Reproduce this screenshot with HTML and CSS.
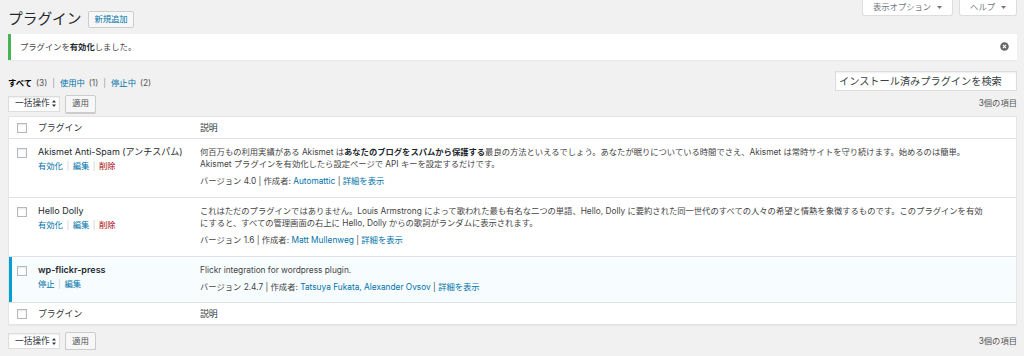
FILE: index.html
```html
<!DOCTYPE html>
<html lang="ja">
<head>
    <meta charset="UTF-8">
    <meta name="viewport" content="width=device-width, initial-scale=1.0">
    <title>プラグイン</title>
    <link rel="stylesheet" href="styles.css">
</head>
<body>
<div class="wrap">
    <div class="page-header">
        <div class="title-group">
            <h1 class="page-title">プラグイン</h1>
            <a class="title-action" href="#">新規追加</a>
        </div>
        <div class="screen-meta">
            <button class="meta-tab">表示オプション
                <svg width="5" height="3" viewBox="0 0 10 6"><path d="M0 0h10L5 6z" fill="#72777c"/></svg>
            </button>
            <button class="meta-tab">ヘルプ
                <svg width="5" height="3" viewBox="0 0 10 6"><path d="M0 0h10L5 6z" fill="#72777c"/></svg>
            </button>
        </div>
    </div>

    <div class="notice">
        <p>プラグインを<strong>有効化</strong>しました。</p>
        <button class="notice-dismiss">
            <svg width="9" height="9" viewBox="0 0 20 20"><circle cx="10" cy="10" r="9.5" fill="#666"/><path d="M6.5 6.5l7 7M13.5 6.5l-7 7" stroke="#fff" stroke-width="2.4"/></svg>
        </button>
    </div>

    <div class="filters">
        <ul class="subsubsub">
            <li><a class="current" href="#">すべて<span class="count">(3)</span></a><span class="sep">|</span></li>
            <li><a href="#">使用中<span class="count">(1)</span></a><span class="sep">|</span></li>
            <li><a href="#">停止中<span class="count">(2)</span></a></li>
        </ul>
        <input class="search-input" type="search" placeholder="インストール済みプラグインを検索">
    </div>

    <div class="tablenav">
        <div class="bulk-actions">
            <div class="select">一括操作
                <svg width="4" height="7" viewBox="0 0 8 14"><path d="M4 0l4 5H0zM4 14l4-5H0z" fill="#32373c"/></svg>
            </div>
            <button class="button">適用</button>
        </div>
        <span class="num-items">3個の項目</span>
    </div>

    <table class="plugins">
        <colgroup>
            <col class="col-check">
            <col class="col-name">
            <col>
        </colgroup>
        <thead>
            <tr>
                <th class="check"><input class="checkbox" type="checkbox"></th>
                <th>プラグイン</th>
                <th>説明</th>
            </tr>
        </thead>
        <tbody>
            <tr class="inactive">
                <th class="check"><input class="checkbox" type="checkbox"></th>
                <td class="plugin-title">
                    <strong>Akismet Anti-Spam (アンチスパム)</strong>
                    <div class="row-actions"><a href="#">有効化</a><span class="sep">|</span><a href="#">編集</a><span class="sep">|</span><a class="delete" href="#">削除</a></div>
                </td>
                <td class="desc">
                    <p>何百万もの利用実績がある Akismet は<strong>あなたのブログをスパムから保護する</strong>最良の方法といえるでしょう。あなたが眠りについている時間でさえ、Akismet は常時サイトを守り続けます。始めるのは簡単。<br>Akismet プラグインを有効化したら設定ページで API キーを設定するだけです。</p>
                    <div class="plugin-meta">バージョン 4.0 | 作成者: <a href="#">Automattic</a> | <a href="#">詳細を表示</a></div>
                </td>
            </tr>
            <tr class="inactive">
                <th class="check"><input class="checkbox" type="checkbox"></th>
                <td class="plugin-title">
                    <strong>Hello Dolly</strong>
                    <div class="row-actions"><a href="#">有効化</a><span class="sep">|</span><a href="#">編集</a><span class="sep">|</span><a class="delete" href="#">削除</a></div>
                </td>
                <td class="desc">
                    <p>これはただのプラグインではありません。Louis Armstrong によって歌われた最も有名な二つの単語、Hello, Dolly に要約された同一世代のすべての人々の希望と情熱を象徴するものです。このプラグインを有効<br>にすると、すべての管理画面の右上に Hello, Dolly からの歌詞がランダムに表示されます。</p>
                    <div class="plugin-meta">バージョン 1.6 | 作成者: <a href="#">Matt Mullenweg</a> | <a href="#">詳細を表示</a></div>
                </td>
            </tr>
            <tr class="active">
                <th class="check"><input class="checkbox" type="checkbox"></th>
                <td class="plugin-title">
                    <strong>wp-flickr-press</strong>
                    <div class="row-actions"><a href="#">停止</a><span class="sep">|</span><a href="#">編集</a></div>
                </td>
                <td class="desc">
                    <p>Flickr integration for wordpress plugin.</p>
                    <div class="plugin-meta">バージョン 2.4.7 | 作成者: <a href="#">Tatsuya Fukata, Alexander Ovsov</a> | <a href="#">詳細を表示</a></div>
                </td>
            </tr>
        </tbody>
        <tfoot>
            <tr>
                <th class="check"><input class="checkbox" type="checkbox"></th>
                <th>プラグイン</th>
                <th>説明</th>
            </tr>
        </tfoot>
    </table>

    <div class="tablenav bottom">
        <div class="bulk-actions">
            <div class="select">一括操作
                <svg width="4" height="7" viewBox="0 0 8 14"><path d="M4 0l4 5H0zM4 14l4-5H0z" fill="#32373c"/></svg>
            </div>
            <button class="button">適用</button>
        </div>
        <span class="num-items">3個の項目</span>
    </div>
</div>
</body>
</html>
```

FILE: styles.css
```css
* {
    box-sizing: border-box;
}
body {
    margin: 0;
    background-color: #f1f1f1;
    font-family: Inter, "Noto Sans CJK JP", sans-serif;
    font-size: 8.3px;
    line-height: 12.5px;
    color: #444;
}
a {
    color: #0073aa;
    text-decoration: none;
}
.wrap {
    padding: 0 7px 0 8px;
}

/* header */
.page-header {
    display: flex;
    justify-content: space-between;
    align-items: flex-start;
}
.title-group {
    display: flex;
    align-items: center;
    gap: 7px;
    height: 21px;
    margin-top: 9px;
}
.page-title {
    margin: 0;
    font-size: 14.7px;
    font-weight: 400;
    line-height: 21px;
    color: #23282d;
}
.title-action {
    padding: 2px 5px;
    border: 1px solid #ccc;
    border-radius: 2px;
    background-color: #f7f7f7;
    line-height: 11px;
}
.screen-meta {
    display: flex;
    gap: 6px;
}
.meta-tab {
    display: flex;
    align-items: center;
    gap: 6px;
    height: 16px;
    padding: 0 10px 1px;
    border: 1px solid #ddd;
    border-top: none;
    border-radius: 0 0 3px 3px;
    background-color: #fff;
    box-shadow: 0 1px 1px -1px rgba(0, 0, 0, .1);
    font: inherit;
    color: #72777c;
    cursor: pointer;
}

/* notice */
.notice {
    display: flex;
    justify-content: space-between;
    align-items: center;
    margin-top: 4px;
    padding: 6.5px 8px 6.5px 9px;
    border-left: 3px solid #46b450;
    background-color: #fff;
    box-shadow: 0 1px 1px rgba(0, 0, 0, .04);
}
.notice p {
    margin: 0;
}
.notice strong {
    color: #23282d;
}
.notice-dismiss {
    display: flex;
    padding: 0;
    border: none;
    background: none;
    cursor: pointer;
}

/* filters + search */
.filters {
    display: flex;
    justify-content: space-between;
    align-items: flex-end;
    margin-top: 11px;
}
.subsubsub {
    display: flex;
    margin: 0 0 1px;
    padding: 0;
    list-style: none;
    color: #666;
}
.subsubsub .current {
    color: #000;
    font-weight: 600;
}
.count {
    margin-left: 4px;
    color: #555;
    font-weight: 400;
}
.subsubsub .sep {
    margin: 0 5px;
    color: #999;
}
.search-input {
    width: 182px;
    height: 20px;
    padding: 0 3px;
    border: 1px solid #ddd;
    background-color: #fff;
    box-shadow: inset 0 1px 2px rgba(0, 0, 0, .07);
    font: inherit;
    font-size: 10.2px;
    color: #32373c;
}
.search-input::placeholder {
    color: #3a3f44;
    opacity: 1;
}

/* tablenav */
.tablenav {
    display: flex;
    justify-content: space-between;
    align-items: center;
    height: 18px;
    margin-top: 4px;
}
.tablenav.bottom {
    margin-top: 7px;
}
.bulk-actions {
    display: flex;
    align-items: center;
    gap: 5px;
}
.select {
    display: flex;
    align-items: center;
    justify-content: space-between;
    width: 52px;
    height: 16px;
    padding: 0 3px 0 6px;
    border: 1px solid #ddd;
    background-color: #fff;
    box-shadow: inset 0 1px 2px rgba(0, 0, 0, .07);
    font-size: 8.7px;
    color: #32373c;
}
.button {
    height: 18px;
    padding: 0 6px;
    border: 1px solid #ccc;
    border-radius: 2px;
    background-color: #f7f7f7;
    box-shadow: 0 1px 0 #ccc;
    font: inherit;
    font-size: 8.5px;
    color: #555;
    cursor: pointer;
}
.num-items {
    color: #555;
}

/* plugins table */
.plugins {
    width: 100%;
    margin-top: 3px;
    border: 1px solid #e5e5e5;
    border-spacing: 0;
    table-layout: fixed;
    background-color: #fff;
    box-shadow: 0 1px 1px rgba(0, 0, 0, .04);
}
.col-check {
    width: 26px;
}
.col-name {
    width: 162px;
}
.plugins th,
.plugins td {
    padding: 7px 3px 9px;
    border-bottom: 1px solid #e1e1e1;
    text-align: left;
    vertical-align: top;
    font-weight: 400;
}
.plugins thead th,
.plugins tfoot th {
    padding: 4px 3px;
    font-size: 8.9px;
    line-height: 13px;
    color: #32373c;
}
.plugins tfoot th {
    border-bottom: none;
}
.plugins .check {
    padding-left: 0;
    padding-right: 0;
}
.checkbox {
    appearance: none;
    display: block;
    width: 10px;
    height: 10px;
    margin: 2px 0 0 8px;
    border: 1px solid #b4b9be;
    border-radius: 0;
    background-color: #fff;
    box-shadow: inset 0 1px 2px rgba(0, 0, 0, .1);
}
.plugins .active th,
.plugins .active td {
    background-color: #f7fcfe;
}
.plugins .active .check {
    box-shadow: inset 3px 0 0 #00a0d2;
}
.plugin-title strong {
    display: block;
    font-size: 9px;
    font-weight: 400;
    color: #23282d;
}
.active .plugin-title strong {
    font-weight: 600;
}
.row-actions {
    margin-top: 1.5px;
}
.row-actions .sep {
    margin: 0 3.5px;
    color: #ccc;
}
.row-actions .delete {
    color: #a00;
}
.desc p {
    margin: 0;
}
.desc strong {
    font-weight: 700;
    color: #23282d;
}
.plugin-meta {
    margin-top: 4.5px;
}
```
